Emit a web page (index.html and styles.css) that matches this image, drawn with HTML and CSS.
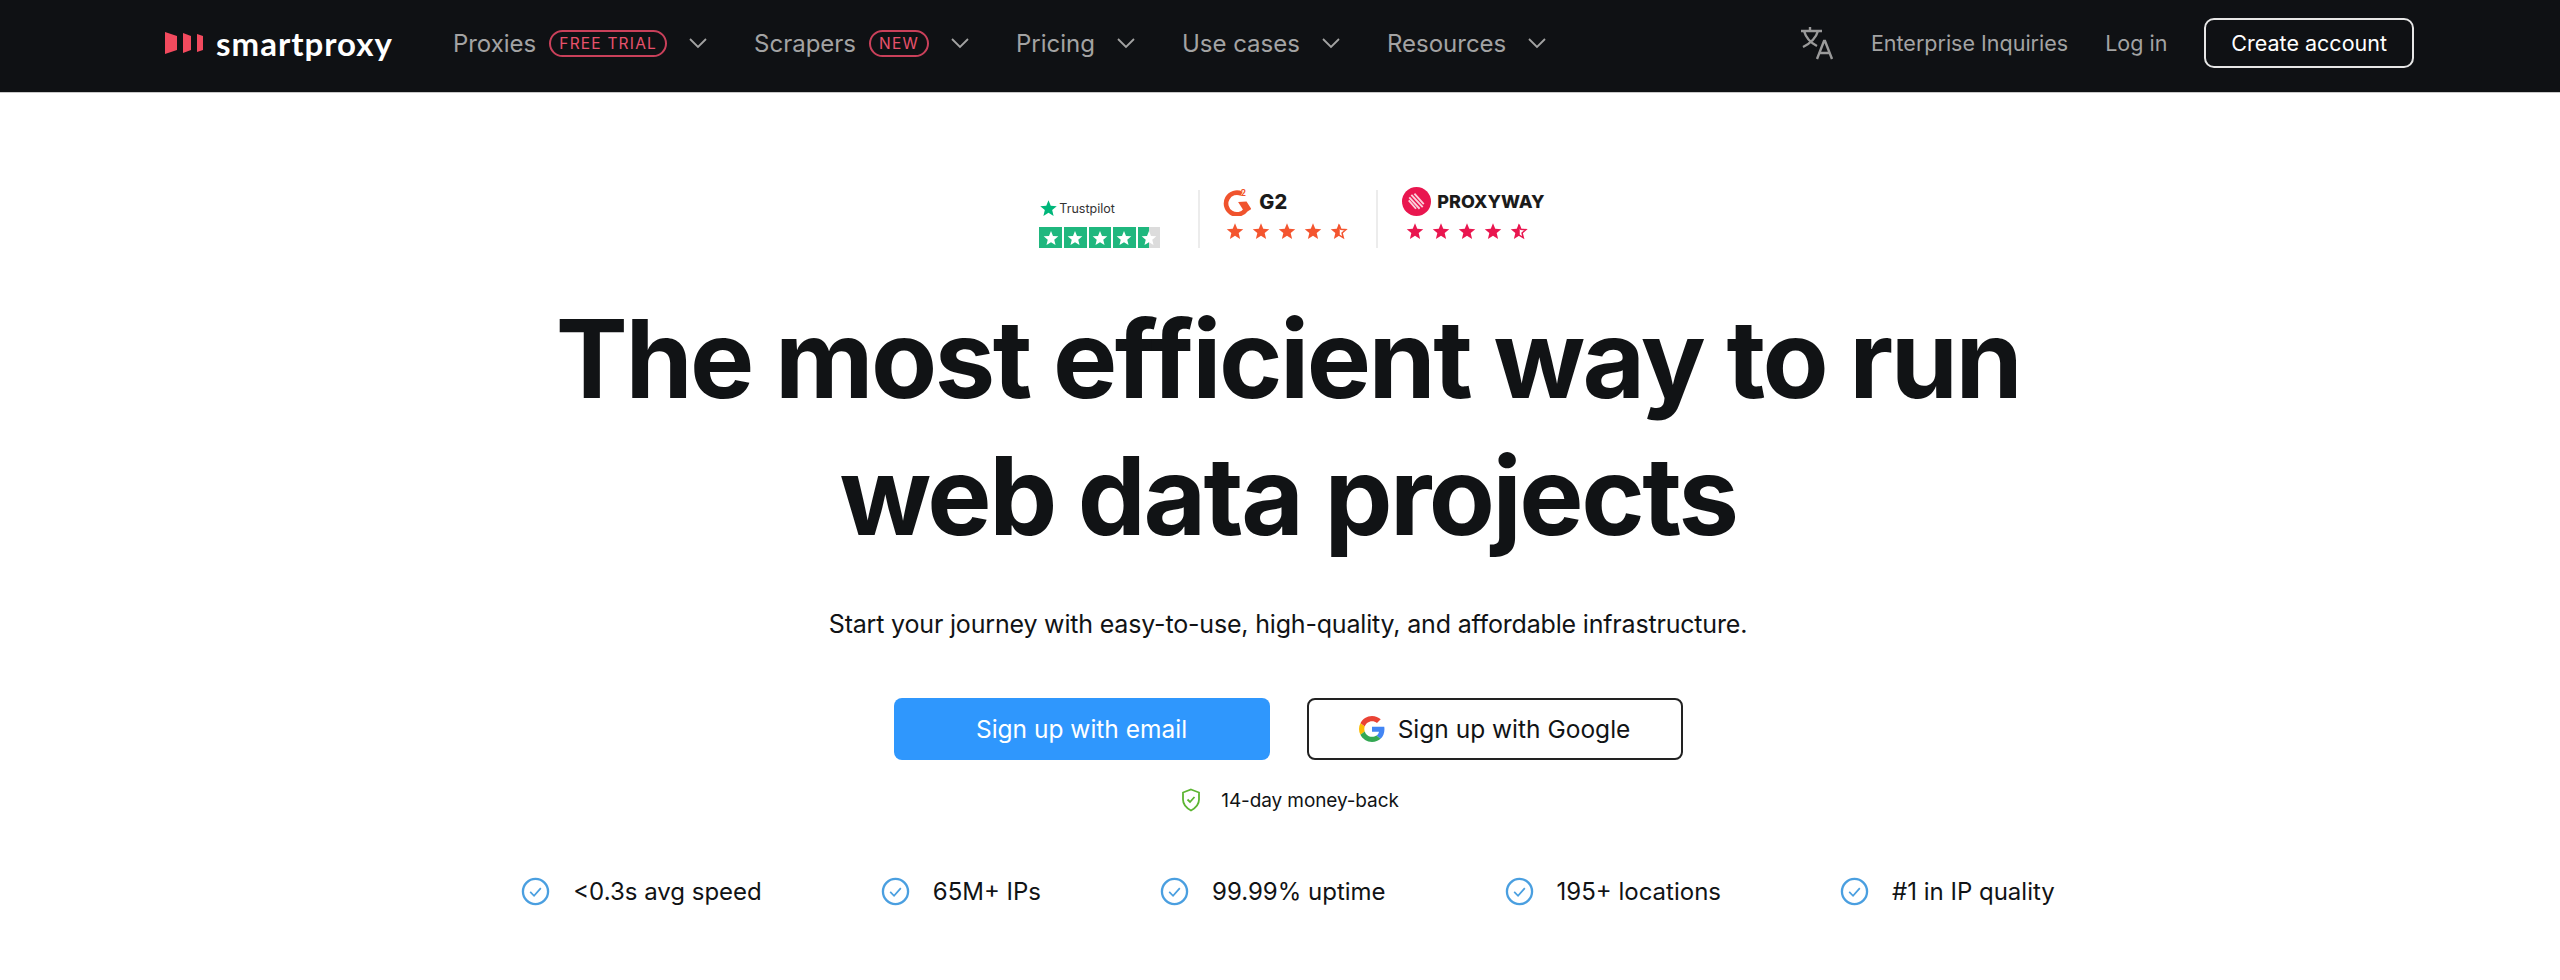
FILE: index.html
```html
<!DOCTYPE html>
<html lang="en">
    <head>
        <meta charset="UTF-8">
        <title>Smartproxy</title>
        <link rel="stylesheet" href="styles.css">
    </head>
    <body>
        <svg class="defs" width="0" height="0">
            <symbol id="chevron" viewBox="0 0 20 12"><path d="M2 2l8 8 8-8" fill="none" stroke="currentColor" stroke-width="1.8"/></symbol>
            <symbol id="star" viewBox="0 0 24 24"><path d="M12 1.5l3 7.4 8 .6-6.100 5.200 1.900 7.800L12 18.300 5.200 22.500l1.900-7.800L1 9.500l8-.6z" fill="currentColor"/></symbol>
            <symbol id="star_half" viewBox="0 0 24 24">
                <path d="M12 1.500v16.800L5.200 22.500l1.900-7.800L1 9.500l8-.6z" fill="currentColor"/>
                <path d="M12 3.500l2.500 6.300 6.600.5-5 4.300 1.600 6.400L12 17.500z" fill="none" stroke="currentColor" stroke-width="2"/>
            </symbol>
            <symbol id="check" viewBox="0 0 30 30">
                <circle cx="15" cy="15" r="13" fill="none" stroke="#4a9fe0" stroke-width="2.400"/>
                <path d="M9.500 15.500l4 4 7-8" fill="none" stroke="#4a9fe0" stroke-width="1.800"/>
            </symbol>
        </svg>

        <nav>
            <a class="logo">
                <svg class="logo_icon" viewBox="0 0 38 22">
                    <path d="M0 0l12 4v14L0 22z" fill="#f24a5e"/>
                    <path d="M18 1l8 3v14l-8 3z" fill="#f24a5e"/>
                    <path d="M32 2l6 2v14l-6 2z" fill="#f24a5e"/>
                </svg>
                <span>smartproxy</span>
            </a>
            <ul class="menu">
                <li>Proxies <span class="pill">FREE TRIAL</span><svg class="chevron"><use href="#chevron"/></svg></li>
                <li>Scrapers <span class="pill">NEW</span><svg class="chevron"><use href="#chevron"/></svg></li>
                <li>Pricing<svg class="chevron"><use href="#chevron"/></svg></li>
                <li>Use cases<svg class="chevron"><use href="#chevron"/></svg></li>
                <li>Resources<svg class="chevron"><use href="#chevron"/></svg></li>
            </ul>
            <div class="nav_right">
                <svg class="translate" viewBox="0 0 34 34" fill="none" stroke="#9a9a9a" stroke-width="2.400">
                    <path d="M1 5h21M10 1v4M4 5c2 7 7 12 13 15M18 5c-2 7-7 12-15 16"/>
                    <path d="M17 33l7-18h1l7 18M19.500 27h11"/>
                </svg>
                <a>Enterprise Inquiries</a>
                <a>Log in</a>
                <a class="create">Create account</a>
            </div>
        </nav>

        <main>
            <div class="ratings">
                <div class="rating trustpilot">
                    <div class="rating_logo">
                        <svg class="tp_star"><use href="#star"/></svg>
                        <span>Trustpilot</span>
                    </div>
                    <div class="tp_bar">
                        <span><svg><use href="#star"/></svg></span>
                        <span><svg><use href="#star"/></svg></span>
                        <span><svg><use href="#star"/></svg></span>
                        <span><svg><use href="#star"/></svg></span>
                        <span class="partial"><svg><use href="#star"/></svg></span>
                    </div>
                </div>
                <div class="rating g2">
                    <div class="rating_logo">
                        <svg class="g2_icon" viewBox="0 0 28 28">
                            <path d="M19 6.500A10.500 10.500 0 1 0 23 22l-3.500-5.500 3-.2 4 6.200" fill="none" stroke="#f0532d" stroke-width="4.500"/>
                            <text x="18" y="8.500" class="g2_two">2</text>
                        </svg>
                        <span>G2</span>
                    </div>
                    <div class="stars">
                        <svg><use href="#star"/></svg>
                        <svg><use href="#star"/></svg>
                        <svg><use href="#star"/></svg>
                        <svg><use href="#star"/></svg>
                        <svg><use href="#star_half"/></svg>
                    </div>
                </div>
                <div class="rating proxyway">
                    <div class="rating_logo">
                        <svg class="pw_icon" viewBox="0 0 28 28">
                            <circle cx="14" cy="14" r="14" fill="#e9164f"/>
                            <path d="M7 10l10 11M9 7.500l11 12M12 6.500l9 10M6.500 13l7 8" stroke="#fbd0da" stroke-width="1.800"/>
                        </svg>
                        <span>PROXYWAY</span>
                    </div>
                    <div class="stars">
                        <svg><use href="#star"/></svg>
                        <svg><use href="#star"/></svg>
                        <svg><use href="#star"/></svg>
                        <svg><use href="#star"/></svg>
                        <svg><use href="#star_half"/></svg>
                    </div>
                </div>
            </div>

            <h1>The most efficient way to run<br>web data projects</h1>
            <p class="lead">Start your journey with easy-to-use, high-quality, and affordable infrastructure.</p>

            <div class="buttons">
                <a class="btn btn_blue">Sign up with email</a>
                <a class="btn btn_white">
                    <svg class="google" viewBox="0 0 48 48">
                        <path fill="#ea4335" d="M24 9.500c3.500 0 6.700 1.200 9.200 3.600l6.900-6.900C35.900 2.400 30.500 0 24 0 14.600 0 6.500 5.400 2.600 13.200l8 6.200C12.400 13.700 17.700 9.500 24 9.500z"/>
                        <path fill="#4285f4" d="M47 24.500c0-1.600-.1-3.100-.4-4.500H24v9h12.900c-.6 3-2.200 5.500-4.700 7.200l7.700 6C44.400 38 47 31.800 47 24.500z"/>
                        <path fill="#fbbc05" d="M10.600 28.600c-.5-1.400-.8-3-.8-4.600s.3-3.200.8-4.600l-8-6.200C.900 16.500 0 20.100 0 24s.9 7.500 2.600 10.800z"/>
                        <path fill="#34a853" d="M24 48c6.500 0 11.900-2.100 15.900-5.800l-7.700-6c-2.200 1.400-4.900 2.300-8.200 2.300-6.300 0-11.600-4.200-13.400-9.900l-8 6.200C6.500 42.600 14.600 48 24 48z"/>
                    </svg>
                    Sign up with Google
                </a>
            </div>

            <div class="money_back">
                <svg viewBox="0 0 20 24" fill="none" stroke="#5cb531" stroke-width="1.800">
                    <path d="M10 1.500l8 3v7c0 5-3.500 8.500-8 11-4.500-2.500-8-6-8-11v-7z"/>
                    <path d="M6.500 11.500l2.500 2.500 4.500-5"/>
                </svg>
                <span>14-day money-back</span>
            </div>

            <ul class="features">
                <li><svg><use href="#check"/></svg>&lt;0.3s avg speed</li>
                <li><svg><use href="#check"/></svg>65M+ IPs</li>
                <li><svg><use href="#check"/></svg>99.99% uptime</li>
                <li><svg><use href="#check"/></svg>195+ locations</li>
                <li><svg><use href="#check"/></svg>#1 in IP quality</li>
            </ul>
        </main>
    </body>
</html>
```

FILE: styles.css
```css
* {
    margin: 0;
    padding: 0;
    box-sizing: border-box;
}
html {
    background-color: white;
}
body {
    font-family: "Inter", "Noto Sans", sans-serif;
    color: #111315;
    overflow: hidden;
}
ul {
    list-style: none;
}
.defs {
    position: absolute;
}

nav {
    display: flex;
    align-items: center;
    height: 93px;
    padding-left: 165px;
    padding-right: 146px;
    padding-bottom: 6px;
    background-color: #0f1114;
    border-bottom: 1px solid #c9c9c9;
    color: #a3a3a3;
    font-size: 24px;
}
.logo {
    display: flex;
    align-items: center;
    gap: 13px;
    color: white;
    font-family: "Lato", sans-serif;
    font-weight: 700;
    font-size: 33px;
    letter-spacing: 1px;
}
.logo_icon {
    width: 38px;
    height: 22px;
}
.menu {
    display: flex;
    gap: 46px;
    margin-left: 60px;
}
.menu li {
    display: flex;
    align-items: center;
    gap: 13px;
}
.pill {
    padding: 2px 8px;
    border: 2px solid #c9405a;
    border-radius: 14px;
    color: #e8526c;
    font-size: 15.500px;
    letter-spacing: 1.200px;
}
.chevron {
    width: 20px;
    height: 12px;
    margin-left: 8px;
}
.nav_right {
    display: flex;
    align-items: center;
    gap: 37px;
    margin-left: auto;
    font-size: 21.500px;
}
.translate {
    width: 34px;
    height: 34px;
}
.create {
    padding: 10px 25px;
    border: 2px solid #e6e6e6;
    border-radius: 10px;
    color: white;
}

main {
    display: flex;
    flex-direction: column;
    align-items: center;
    padding-left: 16px;
}

.ratings {
    display: flex;
    margin-top: 97px;
    margin-left: 8px;
}
.rating {
    display: flex;
    flex-direction: column;
    gap: 6px;
    height: 58px;
    padding-right: 28px;
    margin-right: 24px;
    border-right: 2px solid #ececec;
}
.rating:last-child {
    padding-right: 0;
    margin-right: 0;
    border-right: none;
}
.rating_logo {
    display: flex;
    align-items: center;
}
.trustpilot {
    justify-content: flex-end;
    gap: 10px;
    padding-right: 38px;
    margin-right: 22px;
}
.trustpilot .rating_logo {
    font-size: 12.500px;
    color: #333;
    gap: 1px;
}
.tp_star {
    width: 19px;
    height: 18px;
    color: #00b67a;
}
.tp_bar {
    display: flex;
    gap: 2px;
    width: 121px;
}
.tp_bar span {
    display: flex;
    align-items: center;
    justify-content: center;
    width: 23px;
    height: 21px;
    background-color: #1fb77e;
    color: white;
}
.tp_bar svg {
    width: 16px;
    height: 16px;
}
.tp_bar .partial {
    background: linear-gradient(90deg, #1fb77e 50%, #dcdcdc 50%);
}
.g2 .rating_logo,
.proxyway .rating_logo {
    margin-top: -3px;
    font-weight: 800;
    color: #1b1b1b;
    font-size: 20px;
    gap: 8px;
}
.g2_icon {
    width: 29px;
    height: 29px;
}
.g2_two {
    font-size: 8px;
    font-weight: 700;
    fill: #f0532d;
}
.pw_icon {
    width: 29px;
    height: 29px;
}
.proxyway .rating_logo {
    font-size: 18px;
    gap: 6px;
}
.stars {
    display: flex;
    gap: 8px;
    padding-left: 4px;
}
.stars svg {
    width: 18px;
    height: 18px;
}
.g2 .stars {
    color: #f4552f;
}
.proxyway .stars {
    color: #e9164f;
}

h1 {
    margin-top: 42px;
    font-family: "Inter", sans-serif;
    font-weight: 700;
    font-size: 108px;
    line-height: 137px;
    letter-spacing: -2.500px;
    font-variant-ligatures: none;
    text-align: center;
    color: #111315;
}
.lead {
    margin-top: 45px;
    font-size: 25px;
    letter-spacing: -.180px;
}

.buttons {
    display: flex;
    gap: 37px;
    margin-top: 59px;
}
.btn {
    display: flex;
    align-items: center;
    justify-content: center;
    gap: 13px;
    width: 376px;
    height: 62px;
    border-radius: 8px;
    font-size: 24.500px;
}
.btn_blue {
    background-color: #2f97fd;
    color: white;
}
.btn_white {
    border: 2px solid #222;
}
.google {
    width: 26px;
    height: 26px;
}
.money_back {
    display: flex;
    align-items: center;
    gap: 20px;
    margin-top: 28px;
    margin-left: 4px;
    font-size: 19px;
    letter-spacing: -.100px;
}
.money_back svg {
    width: 20px;
    height: 24px;
}
.features {
    display: flex;
    gap: 119px;
    margin-top: 65px;
    font-size: 24px;
}
.features li {
    display: flex;
    align-items: center;
    gap: 23px;
}
.features svg {
    width: 29px;
    height: 29px;
}
```
